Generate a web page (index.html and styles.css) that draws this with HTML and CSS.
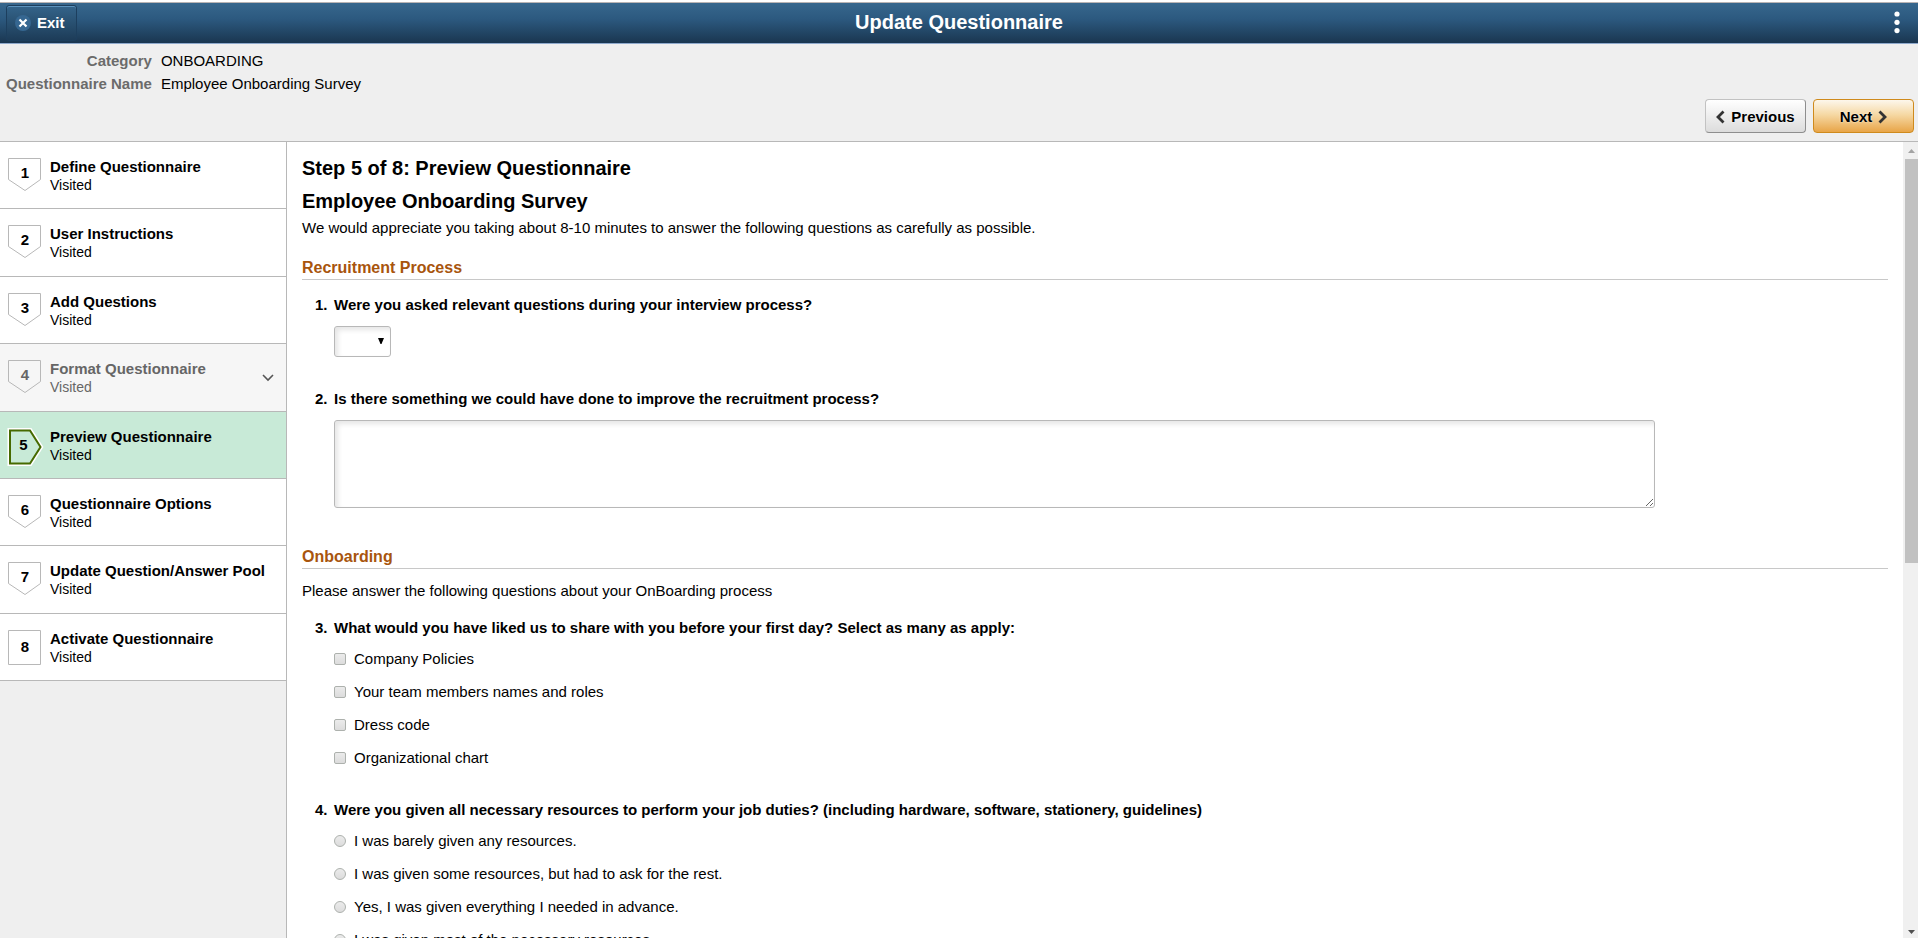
FILE: index.html
```html
<!DOCTYPE html>
<html lang="en">
<head>
<meta charset="utf-8">
<title>Update Questionnaire</title>
<link rel="stylesheet" href="styles.css">
</head>
<body>
<header class="banner">
  <div class="banner-side">
    <button class="exit" type="button">
      <svg width="16" height="16" viewBox="0 0 16 16" aria-hidden="true"><circle cx="8" cy="8" r="8" fill="#366791"/><path d="M4.500 4.500L11.500 11.500M11.500 4.500L4.500 11.500" stroke="#fff" stroke-width="2.200"/></svg>
      <span>Exit</span>
    </button>
  </div>
  <h1 class="banner-title">Update Questionnaire</h1>
  <div class="banner-side banner-right">
    <button class="menu" type="button" aria-label="Actions">
      <svg width="6" height="24" viewBox="0 0 6 24" aria-hidden="true" fill="#fff"><circle cx="3" cy="4" r="2.600"/><circle cx="3" cy="12.300" r="2.600"/><circle cx="3" cy="20.600" r="2.600"/></svg>
    </button>
  </div>
</header>

<section class="summary">
  <dl class="facts">
    <dt>Category</dt><dd>ONBOARDING</dd>
    <dt>Questionnaire Name</dt><dd>Employee Onboarding Survey</dd>
  </dl>
  <div class="nav-buttons">
    <button class="btn" type="button">
      <svg width="9" height="14" viewBox="0 0 9 14" aria-hidden="true"><path d="M7.500 1.500L2 7L7.500 12.500" fill="none" stroke="#333" stroke-width="2.800"/></svg>
      <span>Previous</span>
    </button>
    <button class="btn btn-next" type="button">
      <span>Next</span>
      <svg width="9" height="14" viewBox="0 0 9 14" aria-hidden="true"><path d="M1.500 1.500L7 7L1.500 12.500" fill="none" stroke="#333" stroke-width="2.800"/></svg>
    </button>
  </div>
</section>

<div class="workspace">
  <nav class="sidebar" aria-label="Steps">
    <ol class="steps">
      <li class="step"><a href="#"><span class="badge"><svg viewBox="0 0 34 36" aria-hidden="true"><path d="M.5 .5H32.500V21.500L17 32.500L.5 21.500Z"/></svg><span class="num">1</span></span><span class="label"><b>Define Questionnaire</b><span>Visited</span></span></a></li>
      <li class="step"><a href="#"><span class="badge"><svg viewBox="0 0 34 36" aria-hidden="true"><path d="M.5 .5H32.500V21.500L17 32.500L.5 21.500Z"/></svg><span class="num">2</span></span><span class="label"><b>User Instructions</b><span>Visited</span></span></a></li>
      <li class="step"><a href="#"><span class="badge"><svg viewBox="0 0 34 36" aria-hidden="true"><path d="M.5 .5H32.500V21.500L17 32.500L.5 21.500Z"/></svg><span class="num">3</span></span><span class="label"><b>Add Questions</b><span>Visited</span></span></a></li>
      <li class="step step-group"><a href="#"><span class="badge"><svg viewBox="0 0 34 36" aria-hidden="true"><path d="M.5 .5H32.500V21.500L17 32.500L.5 21.500Z"/></svg><span class="num">4</span></span><span class="label"><b>Format Questionnaire</b><span>Visited</span></span><svg class="chevron" width="12" height="8" viewBox="0 0 12 8" aria-hidden="true"><path d="M1 1L6 6L11 1" fill="none" stroke="#555" stroke-width="1.600"/></svg></a></li>
      <li class="step step-current"><a href="#" aria-current="step"><span class="badge"><svg viewBox="0 0 34 36" aria-hidden="true"><path class="halo" d="M2 2.500H22L32.500 19L22 35.500H2Z"/><path class="edge" d="M2 2.500H22L32.500 19L22 35.500H2Z"/></svg><span class="num">5</span></span><span class="label"><b>Preview Questionnaire</b><span>Visited</span></span></a></li>
      <li class="step"><a href="#"><span class="badge"><svg viewBox="0 0 34 36" aria-hidden="true"><path d="M.5 .5H32.500V21.500L17 32.500L.5 21.500Z"/></svg><span class="num">6</span></span><span class="label"><b>Questionnaire Options</b><span>Visited</span></span></a></li>
      <li class="step"><a href="#"><span class="badge"><svg viewBox="0 0 34 36" aria-hidden="true"><path d="M.5 .5H32.500V21.500L17 32.500L.5 21.500Z"/></svg><span class="num">7</span></span><span class="label"><b>Update Question/Answer Pool</b><span>Visited</span></span></a></li>
      <li class="step step-last"><a href="#"><span class="badge"><svg viewBox="0 0 34 36" aria-hidden="true"><path d="M.5 .5H32.500V34.500H.5Z"/></svg><span class="num">8</span></span><span class="label"><b>Activate Questionnaire</b><span>Visited</span></span></a></li>
    </ol>
  </nav>

  <main class="content">
    <h2 class="title">Step 5 of 8: Preview Questionnaire</h2>
    <h2 class="title">Employee Onboarding Survey</h2>
    <p class="intro">We would appreciate you taking about 8-10 minutes to answer the following questions as carefully as possible.</p>

    <section class="group">
      <h3 class="group-title">Recruitment Process</h3>
      <div class="question">
        <span class="q-num">1.</span>
        <label class="q-text" for="q1">Were you asked relevant questions during your interview process?</label>
        <div class="answer">
          <div class="select-wrap">
            <select id="q1" class="select"><option></option><option>Yes</option><option>No</option></select>
            <svg class="caret" width="6" height="6" viewBox="0 0 6 6" aria-hidden="true"><path d="M0 0H6L3.500 6H2.500Z" fill="#000"/></svg>
          </div>
        </div>
      </div>
      <div class="question">
        <span class="q-num">2.</span>
        <label class="q-text" for="q2">Is there something we could have done to improve the recruitment process?</label>
        <div class="answer"><textarea id="q2" class="textarea"></textarea></div>
      </div>
    </section>

    <section class="group">
      <h3 class="group-title">Onboarding</h3>
      <p class="note">Please answer the following questions about your OnBoarding process</p>
      <div class="question" role="group" aria-labelledby="q3">
        <span class="q-num">3.</span>
        <span class="q-text" id="q3">What would you have liked us to share with you before your first day? Select as many as apply:</span>
        <div class="answer options">
          <label class="option"><input type="checkbox">Company Policies</label>
          <label class="option"><input type="checkbox">Your team members names and roles</label>
          <label class="option"><input type="checkbox">Dress code</label>
          <label class="option"><input type="checkbox">Organizational chart</label>
        </div>
      </div>
      <div class="question" role="radiogroup" aria-labelledby="q4">
        <span class="q-num">4.</span>
        <span class="q-text" id="q4">Were you given all necessary resources to perform your job duties? (including hardware, software, stationery, guidelines)</span>
        <div class="answer options">
          <label class="option"><input type="radio" name="resources">I was barely given any resources.</label>
          <label class="option"><input type="radio" name="resources">I was given some resources, but had to ask for the rest.</label>
          <label class="option"><input type="radio" name="resources">Yes, I was given everything I needed in advance.</label>
          <label class="option"><input type="radio" name="resources">I was given most of the necessary resources.</label>
        </div>
      </div>
    </section>
  </main>

  <div class="scrollbar" aria-hidden="true">
    <svg class="arrow" viewBox="0 0 15 17"><path d="M5 11H12L8.500 7Z" fill="#a3a3a3"/></svg>
    <div class="track"><div class="thumb"></div></div>
    <svg class="arrow" viewBox="0 0 15 17"><path d="M5 9H12L8.500 13Z" fill="#505050"/></svg>
  </div>
</div>
</body>
</html>
```
FILE: styles.css
```css
* { box-sizing: border-box; }

body {
  margin: 0;
  height: 100vh;
  display: flex;
  flex-direction: column;
  overflow: hidden;
  border-top: 2px solid #fff;
  background: #efefef;
  color: #000;
  font-family: "Liberation Sans", Arial, sans-serif;
  font-size: 15px;
  line-height: 20px;
}

button { font: inherit; font-weight: bold; cursor: pointer; }

/* Banner */
.banner {
  flex: none;
  display: grid;
  grid-template-columns: 1fr auto 1fr;
  align-items: center;
  height: 42px;
  border-top: 1px solid #b9b4b4;
  border-bottom: 1px solid #8ea9cc;
  background: linear-gradient(#37678d, #2c597f 40%, #1a3650);
  color: #fff;
}
.banner-title { margin: 0; font-size: 20px; line-height: 24px; padding-bottom: 2px; }
.banner-side { display: flex; padding-left: 6px; }
.banner-right { justify-content: flex-end; padding: 0 18px 2px 0; }
.exit {
  display: flex;
  align-items: center;
  gap: 6px;
  height: 36px;
  padding: 0 11px 0 8px;
  border: 1px solid #1d3f5e;
  border-radius: 3px;
  box-shadow: inset 0 1px #5b91bb;
  background: linear-gradient(#34648a, #1d3c58);
  color: #fff;
}
.menu { display: flex; padding: 0; border: 0; background: none; }

/* Summary */
.summary {
  flex: none;
  display: flex;
  justify-content: space-between;
  min-height: 98px;
  border-bottom: 1px solid #b8b8b8;
}
.facts {
  display: grid;
  grid-template-columns: auto auto;
  align-content: start;
  column-gap: 9px;
  row-gap: 3px;
  margin: 0;
  padding: 7px 0 0 6px;
}
.facts dt { color: #6b6b6b; font-weight: bold; text-align: right; }
.facts dd { margin: 0; }
.nav-buttons { display: flex; align-items: flex-end; gap: 7px; padding: 0 4px 8px 0; }
.btn {
  display: flex;
  align-items: center;
  justify-content: center;
  gap: 6px;
  width: 101px;
  height: 34px;
  padding: 1px 0 0;
  border: 1px solid #c2c2c2;
  border-right-color: #8e8e8e;
  border-bottom-color: #8e8e8e;
  border-radius: 4px;
  background: linear-gradient(#fff, #dcdcdc);
  color: #000;
  text-shadow: 0 0 2px #fff;
}
.btn-next {
  border-color: #cf8a1c;
  background: linear-gradient(#fdf7ec, #f6d9a5 45%, #e8a548);
}

/* Workspace */
.workspace { flex: 1; min-height: 0; display: flex; }
.sidebar { flex: none; width: 287px; border-right: 1px solid #b8b8b8; }
.steps {
  display: grid;
  grid-auto-rows: 1fr;
  min-height: 539px;
  margin: 0;
  padding: 0;
  list-style: none;
  background: #fff;
}
.step { display: flex; border-bottom: 1px solid #b8b8b8; }
.step a {
  flex: 1;
  display: flex;
  align-items: flex-start;
  padding: 16px 12px 0 8px;
  color: #000;
  text-decoration: none;
}
.badge { display: grid; width: 34px; height: 36px; margin-right: 8px; }
.badge > * { grid-area: 1 / 1; }
.badge svg { width: 34px; height: 36px; overflow: visible; }
.badge path { fill: #fff; stroke: #b8b8b8; }
.num { width: 34px; padding-top: 5px; text-align: center; font-weight: bold; }
.label { flex: 1; display: flex; flex-direction: column; line-height: 18px; }
.label > span { font-size: 14px; }
.chevron { margin-top: 14px; }
.step-group { background: #f6f6f6; }
.step-group a { color: #666; }
.step-group .badge path { fill: #f6f6f6; }
.step-current { background: #c8ead7; }
.badge path.halo { fill: none; stroke: #fff; stroke-width: 5; }
.badge path.edge { fill: #c8ead7; stroke: #466a00; stroke-width: 2; }
.step-current .num { padding: 7px 3px 0 0; }
.step-last .num { padding-top: 7px; }

/* Content */
.content {
  flex: 1;
  min-width: 0;
  overflow: hidden;
  padding: 14px 15px 0;
  background: #fff;
}
.title { margin: 0 0 9px; font-size: 20px; line-height: 24px; }
.intro { margin: -4px 0 0; }
.group { margin-top: 18px; }
.group + .group { margin-top: 37px; }
.group-title {
  margin: 0 0 12px;
  border-bottom: 1px solid #c8c8c8;
  color: #a8550d;
  font-size: 16px;
  line-height: 23px;
}
.note { margin: 0 0 17px; }
.question {
  display: grid;
  grid-template-columns: 19px 1fr;
  row-gap: 11px;
  margin: 0 0 32px 13px;
}
.group-title + .question { margin-top: 15px; }
.q-num, .q-text { font-weight: bold; }
.answer { grid-column: 2; }
.select-wrap { position: relative; width: 57px; }
.select {
  display: block;
  width: 100%;
  height: 31px;
  appearance: none;
  border: 1px solid #b8b8b8;
  border-radius: 3px;
  background: #fff;
  box-shadow: inset 3px 3px 5px #e6e6e6;
}
.caret { position: absolute; right: 7px; top: 12px; pointer-events: none; }
.textarea {
  display: block;
  width: 85%;
  height: 88px;
  border: 1px solid #b8b8b8;
  border-radius: 3px;
  background: #fff;
  box-shadow: inset 3px 3px 5px #e6e6e6;
  resize: both;
}
.options { display: grid; gap: 13px; }
.option { display: flex; align-items: center; gap: 8px; }
.option input {
  appearance: none;
  width: 12px;
  height: 12px;
  margin: 0;
  border: 1px solid #adb1ad;
  border-radius: 2px;
  background: linear-gradient(#ebebeb, #dcdcdc);
}
.option input[type="radio"] { border-radius: 50%; }

/* Scrollbar */
.scrollbar {
  flex: none;
  width: 15px;
  display: flex;
  flex-direction: column;
  background: #f0f0f0;
}
.arrow { flex: none; width: 15px; height: 17px; }
.track { flex: 1; padding-left: 2px; }
.thumb { height: 53%; background: #c1c1c1; }
```
